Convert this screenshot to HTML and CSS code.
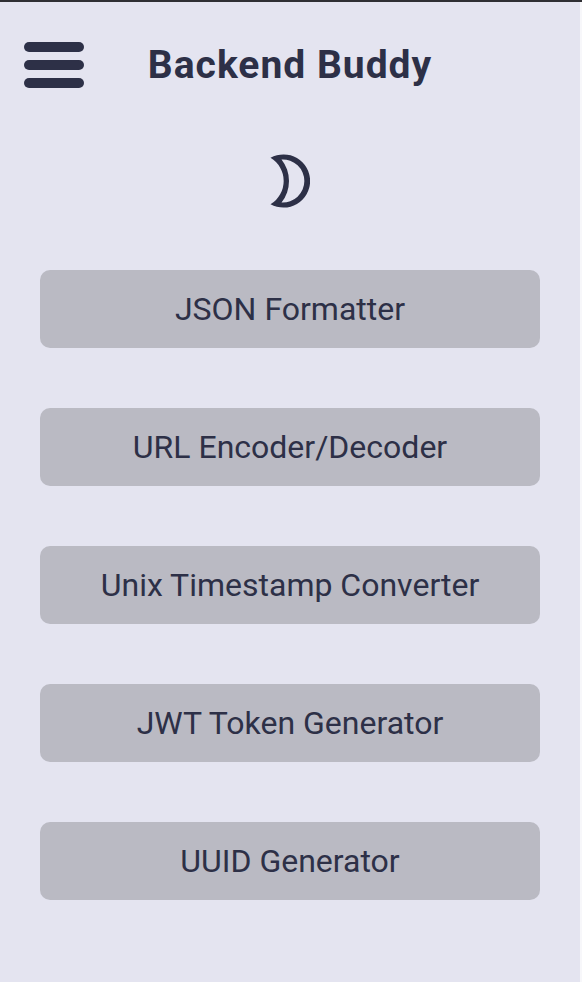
FILE: index.html
```html
<!DOCTYPE html>
<html lang="en">
<head>
  <meta charset="utf-8">
  <meta name="viewport" content="width=device-width, initial-scale=1">
  <title>Backend Buddy</title>
  <link rel="stylesheet" href="styles.css">
</head>
<body>
  <header class="header">
    <button class="menu-button" type="button" aria-label="Menu">
      <span class="menu-bar"></span>
      <span class="menu-bar"></span>
      <span class="menu-bar"></span>
    </button>
    <h1 class="title">Backend Buddy</h1>
  </header>
  <main class="content">
    <button class="theme-button" type="button" aria-label="Dark mode">
      <svg class="moon" viewBox="0 0 40 54" aria-hidden="true">
        <path fill-rule="evenodd" d="M0.500 3.800A26.600 26.600 0 1 1 0.500 50.200A27 27 0 0 0 0.500 3.800ZM11.500 5.500A34.600 34.600 0 0 1 11.500 48.500A21.540 21.540 0 1 0 11.500 5.500Z"/>
      </svg>
    </button>
    <nav class="tools" aria-label="Tools">
      <button class="tool" type="button">JSON Formatter</button>
      <button class="tool" type="button">URL Encoder/Decoder</button>
      <button class="tool" type="button">Unix Timestamp Converter</button>
      <button class="tool" type="button">JWT Token Generator</button>
      <button class="tool" type="button">UUID Generator</button>
    </nav>
  </main>
</body>
</html>
```
FILE: styles.css
```css
* {
  box-sizing: border-box;
}

html {
  border-top: 2px solid #2f2f33;
  background: #e4e4f0;
}

body {
  margin: 0;
  min-height: calc(100vh - 2px);
  border-right: 2px solid #f7f7fa;
  color: #2d3047;
  font-family: Roboto, sans-serif;
}

button {
  margin: 0;
  padding: 0;
  border: 0;
  background: none;
  color: inherit;
  font: inherit;
  cursor: pointer;
}

.header {
  display: grid;
  grid-template-columns: 60px 1fr 60px;
  align-items: center;
  padding: 40px 24px 0;
}

.menu-button {
  display: flex;
  flex-direction: column;
  gap: 8px;
}

.menu-bar {
  width: 100%;
  height: 10px;
  border-radius: 5px;
  background: #2d3047;
}

.title {
  margin: 0;
  font-size: 39px;
  font-weight: 700;
  line-height: 46px;
  letter-spacing: 1px;
  text-align: center;
}

.content {
  display: flex;
  flex-direction: column;
  align-items: center;
  gap: 62px;
  padding: 66px 40px 60px;
}

.theme-button {
  display: flex;
}

.moon {
  width: 40px;
  height: 54px;
  fill: #2d3047;
}

.tools {
  display: flex;
  flex-direction: column;
  gap: 60px;
  width: 100%;
}

.tool {
  padding: 20px;
  border-radius: 10px;
  background: #babac3;
  font-size: 32px;
  line-height: 38px;
}
```
